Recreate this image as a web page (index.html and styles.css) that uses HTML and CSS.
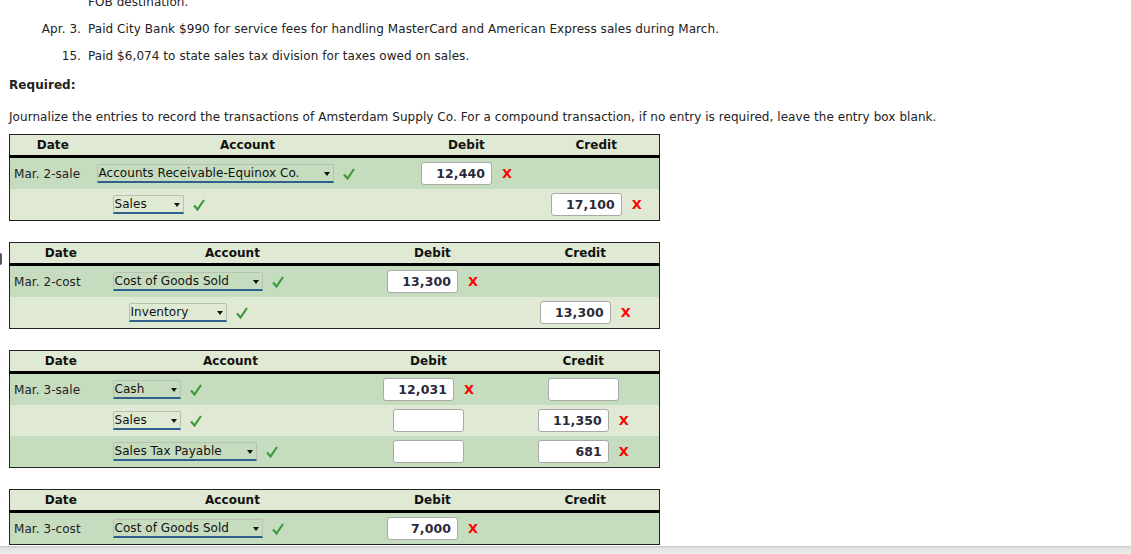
FILE: index.html
```html
<!DOCTYPE html>
<html>
<head>
<meta charset="utf-8">
<link rel="stylesheet" href="styles.css">
</head>
<body>
<div class="page">
  <div class="trans">
    <div class="tline"><span class="tdate"></span><span>FOB destination.</span></div>
    <div class="tline"><span class="tdate">Apr. 3.</span><span>Paid City Bank $990 for service fees for handling MasterCard and American Express sales during March.</span></div>
    <div class="tline"><span class="tdate">15.</span><span>Paid $6,074 to state sales tax division for taxes owed on sales.</span></div>
  </div>
  <p class="req">Required:</p>
  <p class="instr">Journalize the entries to record the transactions of Amsterdam Supply Co. For a compound transaction, if no entry is required, leave the entry box blank.</p>

  <table class="jt t1">
    <colgroup><col class="c-date"><col class="c-acct"><col class="c-deb"><col class="c-cred"></colgroup>
    <thead><tr><th>Date</th><th>Account</th><th>Debit</th><th>Credit</th></tr></thead>
    <tbody>
      <tr class="dark">
        <td class="date">Mar. 2-sale</td>
        <td class="acct"><span class="sel w237">Accounts Receivable-Equinox Co.<i class="arr"></i></span><svg class="chk" viewBox="0 0 14 14"><path d="M2 7.5 L5.5 11.5 L12 2"/></svg></td>
        <td class="amt"><span class="box">12,440</span><b class="x">X</b></td>
        <td class="amt"></td>
      </tr>
      <tr class="light">
        <td class="date"></td>
        <td class="acct"><span class="sel ind w71">Sales<i class="arr"></i></span><svg class="chk" viewBox="0 0 14 14"><path d="M2 7.5 L5.5 11.5 L12 2"/></svg></td>
        <td class="amt"></td>
        <td class="amt"><span class="box">17,100</span><b class="x">X</b></td>
      </tr>
    </tbody>
  </table>

  <span class="edge"></span>
  <table class="jt t2">
    <colgroup><col class="c-date"><col class="c-acct"><col class="c-deb"><col class="c-cred"></colgroup>
    <thead><tr><th>Date</th><th>Account</th><th>Debit</th><th>Credit</th></tr></thead>
    <tbody>
      <tr class="dark">
        <td class="date">Mar. 2-cost</td>
        <td class="acct"><span class="sel w150">Cost of Goods Sold<i class="arr"></i></span><svg class="chk" viewBox="0 0 14 14"><path d="M2 7.5 L5.5 11.5 L12 2"/></svg></td>
        <td class="amt"><span class="box">13,300</span><b class="x">X</b></td>
        <td class="amt"></td>
      </tr>
      <tr class="light">
        <td class="date"></td>
        <td class="acct"><span class="sel ind w98">Inventory<i class="arr"></i></span><svg class="chk" viewBox="0 0 14 14"><path d="M2 7.5 L5.5 11.5 L12 2"/></svg></td>
        <td class="amt"></td>
        <td class="amt"><span class="box">13,300</span><b class="x">X</b></td>
      </tr>
    </tbody>
  </table>

  <table class="jt t3">
    <colgroup><col class="c-date"><col class="c-acct"><col class="c-deb"><col class="c-cred"></colgroup>
    <thead><tr><th>Date</th><th>Account</th><th>Debit</th><th>Credit</th></tr></thead>
    <tbody>
      <tr class="dark">
        <td class="date">Mar. 3-sale</td>
        <td class="acct"><span class="sel w68">Cash<i class="arr"></i></span><svg class="chk" viewBox="0 0 14 14"><path d="M2 7.5 L5.5 11.5 L12 2"/></svg></td>
        <td class="amt"><span class="box">12,031</span><b class="x">X</b></td>
        <td class="amt"><span class="box"></span></td>
      </tr>
      <tr class="light">
        <td class="date"></td>
        <td class="acct"><span class="sel w68">Sales<i class="arr"></i></span><svg class="chk" viewBox="0 0 14 14"><path d="M2 7.5 L5.5 11.5 L12 2"/></svg></td>
        <td class="amt"><span class="box"></span></td>
        <td class="amt"><span class="box">11,350</span><b class="x">X</b></td>
      </tr>
      <tr class="dark">
        <td class="date"></td>
        <td class="acct"><span class="sel w144">Sales Tax Payable<i class="arr"></i></span><svg class="chk" viewBox="0 0 14 14"><path d="M2 7.5 L5.5 11.5 L12 2"/></svg></td>
        <td class="amt"><span class="box"></span></td>
        <td class="amt"><span class="box">681</span><b class="x">X</b></td>
      </tr>
    </tbody>
  </table>

  <table class="jt t2">
    <colgroup><col class="c-date"><col class="c-acct"><col class="c-deb"><col class="c-cred"></colgroup>
    <thead><tr><th>Date</th><th>Account</th><th>Debit</th><th>Credit</th></tr></thead>
    <tbody>
      <tr class="dark">
        <td class="date">Mar. 3-cost</td>
        <td class="acct"><span class="sel w150">Cost of Goods Sold<i class="arr"></i></span><svg class="chk" viewBox="0 0 14 14"><path d="M2 7.5 L5.5 11.5 L12 2"/></svg></td>
        <td class="amt"><span class="box">7,000</span><b class="x">X</b></td>
        <td class="amt"></td>
      </tr>
    </tbody>
  </table>
</div>
<div class="hbar"></div>
</body>
</html>
```

FILE: styles.css
```css
html, body {
  margin: 0;
  padding: 0;
  overflow: hidden;
  background: #fff;
}
body {
  font-family: "DejaVu Sans", Verdana, sans-serif;
  font-size: 12px;
  letter-spacing: 0.06px;
  color: #222;
}
.page {
  position: relative;
  padding-left: 9px;
  margin-top: -5px;
}
.trans {
  display: flex;
  flex-direction: column;
  gap: 13px;
}
.tline {
  display: flex;
  gap: 7px;
  line-height: 14px;
}
.tdate {
  width: 72px;
  text-align: right;
  flex: none;
}
.req {
  margin: 15px 0 0;
  font-weight: bold;
  line-height: 14px;
}
.instr {
  margin: 18px 0 0;
  line-height: 14px;
}
.jt {
  border-collapse: collapse;
  width: 650px;
  table-layout: fixed;
  border: 1px solid #222;
  margin-top: 21px;
}
.t1 { margin-top: 10px; }
.t1 .c-date { width: 86px; }
.t1 .c-acct { width: 304px; }
.t1 .c-deb { width: 134px; }
.t1 .c-cred { width: 126px; }
.t2 .c-date { width: 102px; }
.t2 .c-acct { width: 242px; }
.t2 .c-deb { width: 158px; }
.t2 .c-cred { width: 148px; }
.t3 .c-date { width: 102px; }
.t3 .c-acct { width: 238px; }
.t3 .c-deb { width: 158px; }
.t3 .c-cred { width: 152px; }
.jt th {
  background: #dfe9d3;
  height: 20px;
  padding: 0;
  font-weight: bold;
  text-align: center;
  border-bottom: 3px solid #000;
  color: #111;
}
.jt td {
  height: 31px;
  padding: 0;
  vertical-align: middle;
}
.jt tr.dark td { background: #c6dcbf; }
.jt tr.light td { background: #dfe9d3; }
.jt td.date { padding-left: 4px; white-space: nowrap; }
.jt td.acct { padding-left: 1px; white-space: nowrap; }
.jt td.amt { text-align: center; white-space: nowrap; }
.sel {
  display: inline-flex;
  align-items: center;
  justify-content: space-between;
  box-sizing: border-box;
  height: 19px;
  padding: 0 3px 0 1px;
  border: 1px solid #b8c2b4;
  border-bottom: 2px solid #2f5f8c;
  border-radius: 2px 2px 0 0;
  vertical-align: middle;
  color: #111;
}
.sel.ind { margin-left: 16px; }
.w237 { width: 237px; }
.w71 { width: 71px; }
.w150 { width: 150px; }
.w98 { width: 98px; }
.w68 { width: 68px; }
.w144 { width: 144px; }
.arr {
  width: 0;
  height: 0;
  border-left: 3px solid transparent;
  border-right: 3px solid transparent;
  border-top: 4px solid #111;
  margin-top: 1px;
}
.chk {
  width: 14px;
  height: 14px;
  margin-left: 8px;
  vertical-align: middle;
  fill: none;
  stroke: #3b9a3b;
  stroke-width: 2.2;
}
.box {
  display: inline-block;
  box-sizing: border-box;
  width: 71px;
  height: 23px;
  line-height: 21px;
  background: #fff;
  border: 1px solid #a9a9a9;
  border-radius: 3px;
  text-align: right;
  padding-right: 6px;
  font-weight: bold;
  font-size: 12.5px;
  color: #2a2a3a;
  vertical-align: middle;
}
.x {
  display: inline-block;
  margin-left: 10px;
  color: #f00;
  font-size: 13px;
  font-weight: bold;
  vertical-align: middle;
}
.edge {
  position: absolute;
  left: 0;
  top: 258px;
  width: 2px;
  height: 12px;
  background: #555;
  border-radius: 0 2px 2px 0;
}
.hbar {
  position: fixed;
  left: 0;
  right: 0;
  bottom: 0;
  height: 8px;
  background: linear-gradient(#c8c8c8, #e2e2e2 30%, #ececec);
}
```
